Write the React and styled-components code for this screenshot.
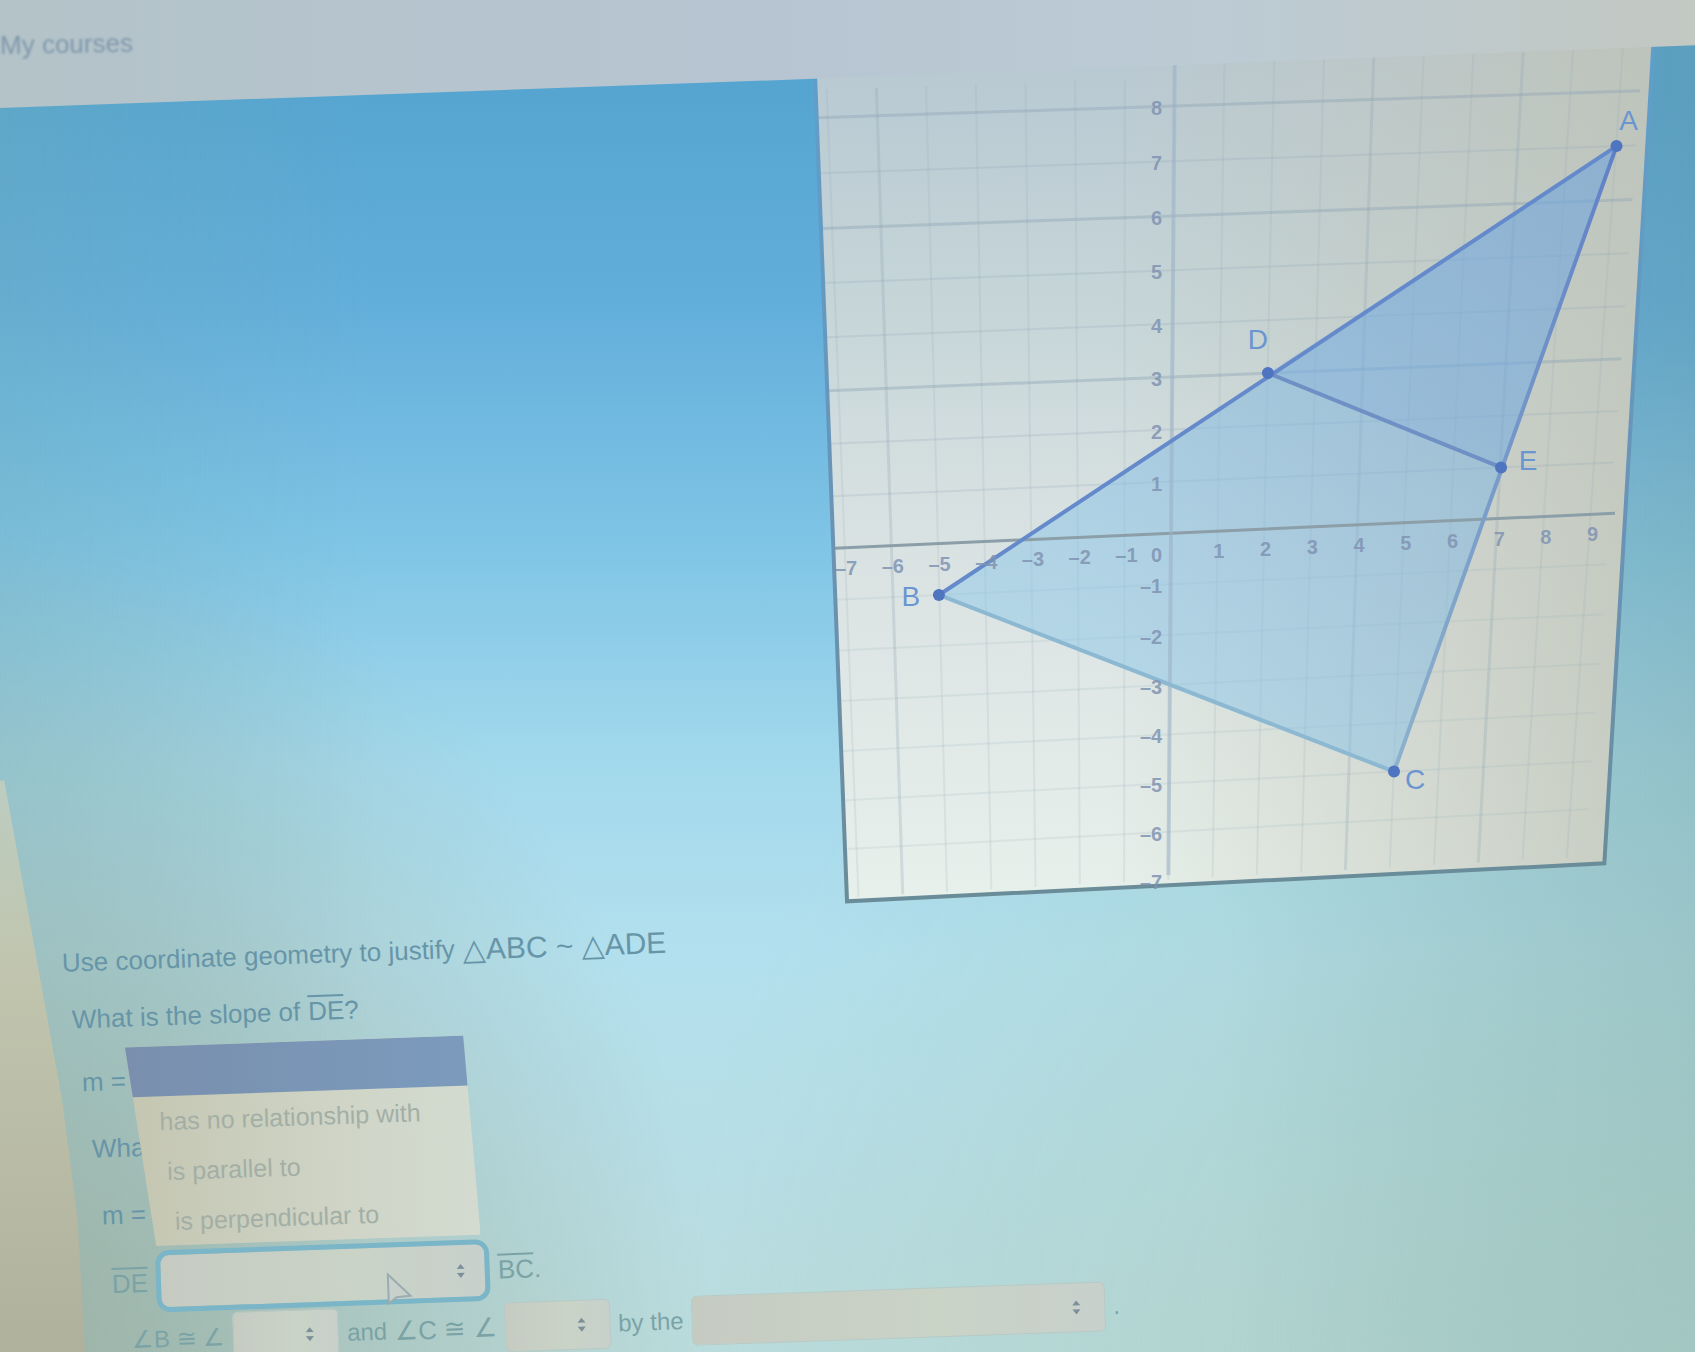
import React from 'react';
import styled, { createGlobalStyle } from 'styled-components';

const strongX = [-6, 4, 7];
const strongY = [8, 6, 3];
const xTicks = Array.from({ length: 17 }, (_, i) => i - 7);
const yTicks = Array.from({ length: 16 }, (_, i) => i - 7);
const minus = (n) => (n < 0 ? `–${-n}` : `${n}`);

// grid coordinates -> tilted plane inside the svg
const project = (u, v) => {
  const dx = u * (46.7 + 0.35 * v);
  return [
    357 + 0.4 * v + dx,
    489 - 51.3 * v - 0.26 * v * v - dx * (0.0447 - 0.0015 * v),
  ];
};
const pts = (list) => list.map(([u, v]) => project(u, v).join(',')).join(' ');

const A = [9, 7];
const B = [-5, -1];
const C = [5, -5];
const D = [2, 3];
const E = [7, 1];

const vertices = [
  { name: 'A', at: A, dx: 12, dy: -16 },
  { name: 'B', at: B, dx: -28, dy: 11 },
  { name: 'C', at: C, dx: 21, dy: 17 },
  { name: 'D', at: D, dx: -10, dy: -24 },
  { name: 'E', at: E, dx: 27, dy: 3 },
];

const Line = ({ from, to, ...rest }) => {
  const [x1, y1] = project(...from);
  const [x2, y2] = project(...to);
  return <line x1={x1} y1={y1} x2={x2} y2={y2} {...rest} />;
};

const Graph = () => (
  <GraphSvg viewBox='0 0 881 862' role='img' aria-label='Triangles ABC and ADE'>
    <defs>
      <linearGradient id='paper' x1='0' y1='0' x2='0' y2='1'>
        <stop offset='0' stopColor='#b8c8d2' />
        <stop offset='0.3' stopColor='#c5d5d8' />
        <stop offset='0.55' stopColor='#d8e1e1' />
        <stop offset='1' stopColor='#e7f0eb' />
      </linearGradient>
      <linearGradient id='glare' x1='0' y1='0' x2='1' y2='0'>
        <stop offset='0.35' stopColor='#c4c6b8' stopOpacity='0' />
        <stop offset='1' stopColor='#bfc3b6' stopOpacity='0.8' />
      </linearGradient>
      <linearGradient id='fill' x1='1' y1='0' x2='0.2' y2='1'>
        <stop offset='0' stopColor='#6ba3dc' stopOpacity='0.5' />
        <stop offset='1' stopColor='#8ecbea' stopOpacity='0.5' />
      </linearGradient>
      <linearGradient id='side' x1='0' y1='0' x2='0' y2='1'>
        <stop offset='0' stopColor='#6080c6' />
        <stop offset='1' stopColor='#8cb2cc' />
      </linearGradient>
      <linearGradient id='frame' x1='0' y1='0' x2='0' y2='1'>
        <stop offset='0' stopColor='#5f9fcb' />
        <stop offset='0.6' stopColor='#6a93b4' />
        <stop offset='1' stopColor='#6a8c98' />
      </linearGradient>
    </defs>
    <polygon points='1,30 839,0 790,819 33,857' fill='url(#paper)' />
    <polygon points='1,30 839,0 790,819 33,857' fill='url(#glare)' />
    {xTicks.map((u) => (
      <Line
        key={u}
        from={[u, u < 0 ? 8.5 : 8.8]}
        to={[u, -7]}
        stroke='#8fa5b5'
        strokeWidth={strongX.includes(u) ? 3 : 2}
        strokeOpacity={strongX.includes(u) ? 0.28 : 0.17}
      />
    ))}
    {yTicks.slice(1).map((v) => (
      <Line
        key={v}
        from={[-7.2, v]}
        to={[9.4, v]}
        stroke='#8fa5b5'
        strokeWidth={strongY.includes(v) ? 3 : 2}
        strokeOpacity={v < 0 ? 0.15 : strongY.includes(v) ? 0.42 : 0.22}
      />
    ))}
    <polygon points={pts([A, B, C])} fill='url(#fill)' />
    <polygon points={pts([A, D, E])} fill='#6f9fe0' fillOpacity='0.18' />
    <Line from={[-7.2, 0]} to={[9.5, 0]} stroke='#8c9fa9' strokeWidth='3' />
    <Line
      from={[0, 8.8]}
      to={[0, -6.9]}
      stroke='#9db2c6'
      strokeWidth='4'
      strokeOpacity='0.55'
    />
    <Line from={B} to={C} stroke='#8cb8d2' strokeWidth='4' />
    <polyline
      points={pts([A, C])}
      fill='none'
      stroke='url(#side)'
      strokeWidth='4'
    />
    <Line from={D} to={E} stroke='#6f90c4' strokeWidth='4' />
    <Line from={A} to={B} stroke='#648acb' strokeWidth='4' />
    <polyline
      points='1,30 33,857 790,819 839,0'
      fill='none'
      stroke='url(#frame)'
      strokeWidth='4'
    />
    {xTicks
      .filter((u) => u !== 0)
      .map((u) => {
        const [x, y] = project(u, 0);
        return (
          <TickText key={u} x={u < 0 ? x + 2 : x + 1} y={y + 27}>
            {minus(u)}
          </TickText>
        );
      })}
    {yTicks.map((v) => {
      const [, y] = project(0, v);
      return (
        <TickText key={v} x='348' y={v === 0 ? 518 : y + 9} $end>
          {minus(v)}
        </TickText>
      );
    })}
    {vertices.map(({ name, at, dx, dy }) => {
      const [x, y] = project(...at);
      return (
        <g key={name}>
          <circle cx={x} cy={y} r='6' fill='#4f74c0' />
          <VertexText x={x + dx} y={y + dy}>
            {name}
          </VertexText>
        </g>
      );
    })}
  </GraphSvg>
);

const Picker = ({ label, width, focused, children }) => (
  <PickerBox $width={width}>
    <PickerSelect aria-label={label} $focused={focused}>
      <option value=''></option>
    </PickerSelect>
    <Arrows viewBox='0 0 10 16' aria-hidden='true'>
      <path d='M5 1 L9 6 H1 Z M5 15 L9 10 H1 Z' />
    </Arrows>
    {children}
  </PickerBox>
);

const App = () => (
  <>
    <GlobalStyle />
    <Page>
      <Header>
        <NavLink href='#'>My courses</NavLink>
      </Header>
      <Main>
        <Graph />
        <Question>
          <Row $step={0} $height={54}>
            <span>Use coordinate geometry to justify</span>
            <Formula>△ABC ~ △ADE</Formula>
          </Row>
          <Row $step={1} $height={60}>
            <span>What is the slope of</span>
            <span>
              <Segment>DE</Segment>?
            </span>
          </Row>
          <Row $step={2}>m =</Row>
          <Row $step={3}>Wha</Row>
          <Row $step={4}>m =</Row>
          <Row $step={5} $faded>
            <Segment>DE</Segment>
            <Picker label='Relationship' width={334} focused>
              <Menu role='listbox' aria-label='Relationship'>
                <MenuItem role='option' aria-selected='true' $active />
                <MenuItem role='option' $indent={32}>
                  has no relationship with
                </MenuItem>
                <MenuItem role='option' $indent={38}>
                  is parallel to
                </MenuItem>
                <MenuItem role='option' $indent={44}>
                  is perpendicular to
                </MenuItem>
              </Menu>
              <Pointer viewBox='0 0 26 34' aria-hidden='true'>
                <path d='M2 2 L2 31 L10 25 L24 24 Z' />
              </Pointer>
            </Picker>
            <MathText>
              <Segment>BC</Segment>.
            </MathText>
          </Row>
          <Row $step={7} $height={50} $faded>
            <span>∠B ≅ ∠</span>
            <Picker label='Angle for B' width={106} />
            <span>and</span>
            <MathText>∠C ≅ ∠</MathText>
            <Picker label='Angle for C' width={106} />
            <span>by the</span>
            <Picker label='Similarity reason' width={414} />
            <span>.</span>
          </Row>
        </Question>
      </Main>
    </Page>
  </>
);

const GlobalStyle = createGlobalStyle`
  * {
    box-sizing: border-box;
  }
  body {
    margin: 0;
    overflow: hidden;
    font-family: 'Liberation Sans', Arial, sans-serif;
  }
`;

const Page = styled.div`
  position: relative;
  min-height: 100vh;
  overflow: hidden;
  background: radial-gradient(
      ellipse 42% 62% at 0% 100%,
      rgba(156, 176, 162, 0.95),
      rgba(156, 180, 168, 0) 100%
    ),
    radial-gradient(
      ellipse 60% 75% at 100% 100%,
      rgba(166, 202, 192, 0.8),
      rgba(166, 205, 198, 0) 100%
    ),
    linear-gradient(
      to right,
      rgba(110, 170, 180, 0.3),
      rgba(110, 170, 180, 0) 22%,
      rgba(110, 160, 170, 0) 72%,
      rgba(100, 150, 165, 0.42)
    ),
    linear-gradient(
      #56a5d1 7%,
      #62aedb 22%,
      #80c5e6 40%,
      #a3d9ec 56%,
      #b3e0ee 70%,
      #bbdcdc 100%
    );
  /* strip beside the page */
  &::before {
    content: '';
    position: absolute;
    left: 0;
    bottom: 0;
    width: 86px;
    height: 590px;
    background: linear-gradient(#bccdc0, #c1c4ad 35%, #aeb09b);
    clip-path: polygon(0 0, 5% 0, 36% 25%, 72% 54%, 90% 74%, 100% 100%, 0 100%);
  }
`;

const Header = styled.header`
  position: relative;
  z-index: 1;
  height: 108px;
  padding-top: 30px;
  background: linear-gradient(to right, #b3c3c8, #b7c5d2 45%, #bccbd4 72%, #c2c8c2);
  clip-path: polygon(0 0, 100% 0, 100% 42%, 48% 73%, 0 100%);
`;

const NavLink = styled.a`
  display: inline-block;
  color: #8098ac;
  font-size: 26px;
  line-height: 28px;
  text-decoration: none;
  transform: rotate(-1deg);
  filter: blur(1px);
`;

const Main = styled.main`
  display: flex;
  flex-direction: column;
  margin-top: -64px;
`;

const GraphSvg = styled.svg`
  display: block;
  width: 52%;
  margin-left: 48%;
`;

const TickText = styled.text`
  font-size: 20px;
  font-weight: bold;
  fill: #8093b2;
  fill-opacity: 0.85;
  text-anchor: ${({ $end }) => ($end ? 'end' : 'middle')};
`;

const VertexText = styled.text`
  font-size: 28px;
  fill: #6b95d0;
  text-anchor: middle;
`;

const Question = styled.section`
  margin-top: 32px;
  color: #6795a8;
  font-size: 26px;
`;

const Row = styled.div`
  display: flex;
  align-items: center;
  gap: 8px;
  height: ${({ $height }) => $height || 67}px;
  padding-left: ${({ $step }) => 62 + $step * 10}px;
  color: ${({ $faded }) => ($faded ? '#7ba3a6' : 'inherit')};
  font-size: ${({ $faded }) => ($faded ? 24 : 26)}px;
  white-space: nowrap;
  transform: rotate(-2deg);
  transform-origin: left center;
`;

const MathText = styled.span`
  font-size: 26px;
`;

const Formula = styled.span`
  font-size: 30px;
`;

const Segment = styled.span`
  display: inline-block;
  border-top: 2px solid currentColor;
  font-size: 26px;
  line-height: 28px;
`;

const PickerBox = styled.div`
  position: relative;
  width: ${({ $width }) => $width}px;
`;

const PickerSelect = styled.select`
  display: block;
  width: 100%;
  height: ${({ $focused }) => ($focused ? 62 : 50)}px;
  appearance: none;
  border: ${({ $focused }) =>
    $focused ? '5px solid #7ab5c8' : '1px solid #bac9c4'};
  border-radius: ${({ $focused }) => ($focused ? 14 : 6)}px;
  background: linear-gradient(to right, #c6cbc2, #c9d3c6 60%, #c8d0cc);
  outline: none;
`;

const Arrows = styled.svg`
  position: absolute;
  right: 24px;
  top: 50%;
  width: 10px;
  height: 16px;
  margin-top: -8px;
  fill: #7d909a;
  pointer-events: none;
`;

const Menu = styled.ul`
  position: absolute;
  left: -23px;
  bottom: calc(100% + 4px);
  width: 349px;
  margin: 0;
  padding: 0;
  list-style: none;
  background: linear-gradient(to right, #c4c6b1, #cfd4c6 60%, #d3dbd0);
  clip-path: polygon(0 0, 97% 0, 100% 100%, 7% 100%);
`;

const MenuItem = styled.li`
  height: 50px;
  padding-left: ${({ $indent }) => $indent || 0}px;
  background: ${({ $active }) =>
    $active ? 'linear-gradient(to right, #7a8fae, #7b9bbd)' : 'none'};
  color: #a3afa6;
  font-size: 25px;
  line-height: 50px;
`;

const Pointer = styled.svg`
  position: absolute;
  left: 230px;
  top: 30px;
  width: 26px;
  height: 34px;
  fill: #c8d0cc;
  stroke: #9aacb0;
  stroke-width: 2;
  pointer-events: none;
`;

export default App;
